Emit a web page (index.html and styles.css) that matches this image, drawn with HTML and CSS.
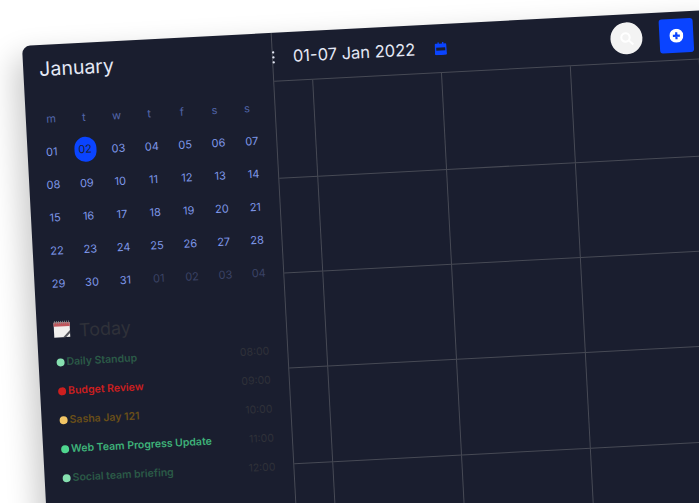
FILE: index.html
```html
<!DOCTYPE html>
<html>
<head>
  <title>Calendar</title>
  <meta name="viewport" content="width=device-width, initial-scale=1">
  <link rel="stylesheet" href="styles.css">
</head>
<body>

  <div class="app">
    <aside class="sidebar">
      <h2 class="month">January</h2>

      <div class="week">
        <span>m</span><span>t</span><span>w</span><span>t</span><span>f</span><span>s</span><span>s</span>
      </div>

      <div class="days">
        <span>01</span><span class="sel">02</span><span>03</span><span>04</span><span>05</span><span>06</span><span>07</span>
        <span>08</span><span>09</span><span>10</span><span>11</span><span>12</span><span>13</span><span>14</span>
        <span>15</span><span>16</span><span>17</span><span>18</span><span>19</span><span>20</span><span>21</span>
        <span>22</span><span>23</span><span>24</span><span>25</span><span>26</span><span>27</span><span>28</span>
        <span>29</span><span>30</span><span>31</span><span class="off">01</span><span class="off">02</span><span class="off">03</span><span class="off">04</span>
      </div>

      <div class="today">
        <svg class="note" viewBox="0 0 18 18">
          <rect x="1" y="2" width="16" height="15" fill="#f1f0ee"/>
          <rect x="1" y="2" width="16" height="4" fill="#c0565c"/>
          <path d="M2 .5v3M4 .5v3M6 .5v3M8 .5v3M10 .5v3M12 .5v3M14 .5v3M16 .5v3" stroke="#8f8f8f" stroke-width=".8"/>
          <path d="M10 17l7-7v3l-4 4z" fill="#55565c"/>
        </svg>
        <span>Today</span>
      </div>

      <ul class="events">
        <li class="ev-a"><i></i><b>Daily Standup</b><time>08:00</time></li>
        <li class="ev-b"><i></i><b>Budget Review</b><time>09:00</time></li>
        <li class="ev-c"><i></i><b>Sasha Jay 121</b><time>10:00</time></li>
        <li class="ev-d"><i></i><b>Web Team Progress Update</b><time>11:00</time></li>
        <li class="ev-a"><i></i><b>Social team briefing</b><time>12:00</time></li>
      </ul>
    </aside>

    <main class="main">
      <header class="top">
        <svg class="dots" viewBox="0 0 3 13"><circle cx="1.5" cy="1.5" r="1.2"/><circle cx="1.5" cy="6.5" r="1.2"/><circle cx="1.5" cy="11.5" r="1.2"/></svg>
        <h1 class="range">01-07 Jan 2022</h1>
        <svg class="cal-icon" viewBox="0 0 12 13">
          <path d="M3 0h1.4v1.5h3.2V0H9v1.5h1.6A1.4 1.4 0 0 1 12 2.900v8.700a1.4 1.4 0 0 1-1.4 1.400H1.400A1.4 1.4 0 0 1 0 11.600V2.900a1.4 1.4 0 0 1 1.4-1.400H3z"/>
          <rect x="1.5" y="5.5" width="9" height="3" fill="#1a1e2f"/>
        </svg>
        <button class="search">
          <svg viewBox="0 0 16 16"><circle cx="6.5" cy="6.5" r="4.5"/><path d="M10 10l4.500 4.500"/></svg>
        </button>
        <button class="add">
          <svg viewBox="0 0 14 14"><circle cx="7" cy="7" r="7" fill="#fff"/><path d="M7 3.500v7M3.500 7h7" stroke="#0a44ff" stroke-width="2.200"/></svg>
        </button>
      </header>

      <div class="grid">
        <div></div><div></div><div></div><div></div><div></div>
        <div></div><div></div><div></div><div></div><div></div>
        <div></div><div></div><div></div><div></div><div></div>
        <div></div><div></div><div></div><div></div><div></div>
        <div></div><div></div><div></div><div></div><div></div>
      </div>
    </main>
  </div>

</body>
</html>
```

FILE: styles.css
```css
html, body {
  margin: 0;
  height: 503px;
  overflow: hidden;
  background: #fff;
}
body {
  padding: 46px 0 0 22px;
  box-sizing: border-box;
  font-family: Inter, "Liberation Sans", sans-serif;
}
.app {
  display: flex;
  width: 700px;
  height: 530px;
  background: #1a1e2f;
  border-radius: 8px 0 0 0;
  box-shadow: -8px 12px 30px rgba(0, 0, 0, .22);
  transform: rotate(-3deg);
  transform-origin: 0 0;
  overflow: hidden;
}

/* left column */
.sidebar {
  width: 250px;
  flex: none;
  box-sizing: border-box;
  border-right: 1px solid #474a55;
}
.month {
  margin: 12px 0 0 16px;
  font-size: 19.5px;
  line-height: 24px;
  font-weight: 400;
  color: #e4e8f5;
}
.week, .days {
  display: grid;
  align-items: center;
  justify-items: center;
  font-size: 11px;
}
.week {
  grid-template-columns: repeat(7, 32.7px);
  height: 33px;
  margin: 21px 0 0 9px;
  color: #5266ab;
}
.days {
  grid-template-columns: repeat(7, 33.4px);
  grid-auto-rows: 33px;
  margin-left: 7.5px;
  color: #7f98ea;
}
.days .sel {
  width: 22px;
  height: 25px;
  line-height: 25px;
  text-align: center;
  border-radius: 11px;
  background: #0a44ff;
  color: #1a1e2f;
}
.days .off {
  color: #3a4366;
}
.today {
  display: flex;
  align-items: center;
  gap: 8px;
  margin: 20px 0 0 16px;
  font-size: 18px;
  line-height: 24px;
  color: #2f3139;
}
.note {
  width: 18px;
  height: 18px;
  margin-top: -5px;
}
.events {
  list-style: none;
  margin: 4px 0 0;
  padding: 0 18px 0 18px;
}
.events li {
  display: flex;
  align-items: center;
  height: 29px;
  font-size: 10.5px;
}
.events i {
  width: 8px;
  height: 8px;
  margin-right: 2px;
  border-radius: 50%;
}
.events b {
  font-weight: 600;
}
.events time {
  margin-left: auto;
  font-size: 10.5px;
  color: #2f3139;
}
.ev-a i { background: #86e0b0; }
.ev-a b { color: #2b5a47; }
.ev-b i { background: #cc1f1f; }
.ev-b b { color: #cc1f1f; }
.ev-c i { background: #f2c565; }
.ev-c b { color: #6a4f18; }
.ev-d i { background: #4fd68f; }
.ev-d b { color: #3eb279; }

/* right column */
.main {
  flex: 1;
  min-width: 0;
}
.top {
  display: flex;
  align-items: center;
  height: 48px;
  padding-right: 29px;
  border-bottom: 1px solid #474a55;
}
.dots {
  width: 3px;
  height: 13px;
  fill: #e4e8f5;
  margin-left: -1px;
}
.range {
  margin: 0 0 0 18px;
  font-size: 16.5px;
  font-weight: 400;
  color: #e4e8f5;
}
.cal-icon {
  width: 12px;
  height: 13px;
  fill: #0a44ff;
  margin-left: 20px;
}
.search, .add {
  border: none;
  padding: 0;
  display: flex;
  align-items: center;
  justify-content: center;
}
.search {
  width: 32px;
  height: 32px;
  margin-left: auto;
  border-radius: 50%;
  background: #f3f3f3;
}
.search svg {
  width: 15px;
  height: 15px;
  fill: none;
  stroke: #fff;
  stroke-width: 2.2;
}
.add {
  width: 34px;
  height: 34px;
  margin-left: 17px;
  border-radius: 3px;
  background: #0a44ff;
}
.add svg {
  width: 14px;
  height: 14px;
}
.grid {
  display: grid;
  grid-template-columns: 39px repeat(4, 129px);
  grid-template-rows: 97px repeat(4, 95.2px);
}
.grid div {
  box-sizing: border-box;
  border-right: 1px solid #474a55;
  border-bottom: 1px solid #474a55;
}
```
